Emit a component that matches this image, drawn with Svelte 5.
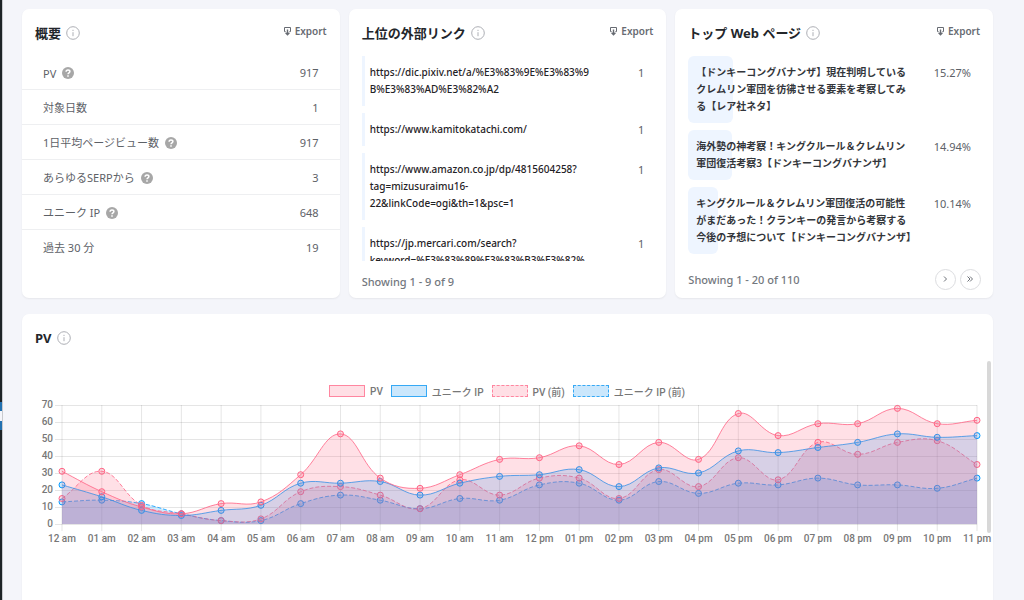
<script lang="ts">
	const overview = [
		{ label: 'PV', value: 917, help: true },
		{ label: '対象日数', value: 1, help: false },
		{ label: '1日平均ページビュー数', value: 917, help: true },
		{ label: 'あらゆるSERPから', value: 3, help: true },
		{ label: 'ユニーク IP', value: 648, help: true },
		{ label: '過去 30 分', value: 19, help: false }
	];

	const links = [
		{ url: 'https://dic.pixiv.net/a/%E3%83%9E%E3%83%9B%E3%83%AD%E3%82%A2', count: 1 },
		{ url: 'https://www.kamitokatachi.com/', count: 1 },
		{
			url: 'https://www.amazon.co.jp/dp/4815604258?tag=mizusuraimu16-22&linkCode=ogi&th=1&psc=1',
			count: 1
		},
		{
			url: 'https://jp.mercari.com/search?keyword=%E3%83%89%E3%83%B3%E3%82%',
			count: 1
		}
	];

	const pages = [
		{
			title:
				'【ドンキーコングバナンザ】現在判明しているクレムリン軍団を彷彿させる要素を考察してみる【レア社ネタ】',
			percent: 15.27
		},
		{
			title: '海外勢の神考察！キングクルール＆クレムリン軍団復活考察3【ドンキーコングバナンザ】',
			percent: 14.94
		},
		{
			title:
				'キングクルール＆クレムリン軍団復活の可能性がまだあった！クランキーの発言から考察する今後の予想について【ドンキーコングバナンザ】',
			percent: 10.14
		}
	];

	const series = [
		{
			name: 'PV',
			kind: 'pink',
			prev: false,
			data: [31, 19, 10, 6, 12, 13, 29, 53, 27, 21, 29, 38, 39, 46, 35, 48, 38, 65, 52, 59, 59, 68, 59, 61]
		},
		{
			name: 'ユニーク IP',
			kind: 'blue',
			prev: false,
			data: [23, 16, 8, 5, 8, 11, 24, 24, 25, 17, 24, 28, 29, 32, 22, 33, 30, 43, 42, 45, 48, 53, 51, 52]
		},
		{
			name: 'PV (前)',
			kind: 'pink',
			prev: true,
			data: [15, 31, 11, 6, 2, 3, 19, 22, 17, 9, 26, 17, 27, 27, 15, 32, 22, 39, 26, 48, 41, 48, 49, 35]
		},
		{
			name: 'ユニーク IP (前)',
			kind: 'blue',
			prev: true,
			data: [13, 14, 12, 6, 2, 2, 12, 17, 14, 9, 15, 14, 23, 24, 14, 25, 18, 24, 23, 27, 23, 23, 21, 27]
		}
	];
	// first series ends up on top
	const layers = [...series].reverse();

	const hours = Array.from({ length: 24 }, (_, i) => {
		const h = String(i % 12 || 12).padStart(2, '0');
		return `${h} ${i < 12 ? 'am' : 'pm'}`;
	});
	const ticks = [0, 10, 20, 30, 40, 50, 60, 70];

	const left = 27;
	const top = 6;
	const plotHeight = 119;
	const bottom = top + plotHeight;
	const tension = 0.4;

	let width = 958;
	$: right = width - 16;
	$: x = (i: number) => left + (i * (right - left)) / 23;
	const y = (v: number) => bottom - (v * plotHeight) / 70;

	function curve(data: number[], x: (i: number) => number) {
		const pts = data.map((v, i) => [x(i), y(v)]);
		const clamp = (v: number) => Math.min(bottom, Math.max(top, v));
		const cps = pts.map((p, i) => {
			const a = pts[i - 1] || p;
			const b = pts[i + 1] || p;
			const d1 = Math.hypot(p[0] - a[0], p[1] - a[1]);
			const d2 = Math.hypot(b[0] - p[0], b[1] - p[1]);
			const k1 = (tension * d1) / (d1 + d2);
			const k2 = (tension * d2) / (d1 + d2);
			const dx = b[0] - a[0];
			const dy = b[1] - a[1];
			return {
				before: [p[0] - k1 * dx, clamp(p[1] - k1 * dy)],
				after: [p[0] + k2 * dx, clamp(p[1] + k2 * dy)]
			};
		});
		let d = `M${pts[0]}`;
		for (let i = 1; i < pts.length; i++) {
			d += `C${cps[i - 1].after} ${cps[i].before} ${pts[i]}`;
		}
		return d;
	}
</script>

{#snippet info()}
	<svg class="info" viewBox="0 0 14 14" aria-hidden="true">
		<circle cx="7" cy="7" r="6.3" />
		<path d="M7 6.2v4M7 3.8v1.2" />
	</svg>
{/snippet}

{#snippet exportButton()}
	<button class="export">
		<svg viewBox="0 0 9 10" aria-hidden="true">
			<path d="M2.6 5.6H1.5V1.5h6v4.1H6.4" />
			<path class="arrow" d="M4.5 3.4v5M2.6 6.7l1.9 2 1.9-2" />
		</svg>
		Export
	</button>
{/snippet}

<div class="page">
	<div class="menu-edge"><span></span></div>
	<main>
		<div class="cards">
			<section class="card">
				<header>
					<h2>概要</h2>
					{@render info()}
					{@render exportButton()}
				</header>
				<table>
					<tbody>
						{#each overview as row}
							<tr>
								<th scope="row">
									<span>{row.label}</span>
									{#if row.help}
										<svg class="help" viewBox="0 0 12 12" aria-hidden="true">
											<circle cx="6" cy="6" r="6" />
											<path d="M4.1 4.7c0-2.4 3.8-2.3 3.8-.1 0 1.3-1.9 1.3-1.9 2.7M6 8.3v1.5" />
										</svg>
									{/if}
								</th>
								<td>{row.value}</td>
							</tr>
						{/each}
					</tbody>
				</table>
			</section>

			<section class="card">
				<header>
					<h2>上位の外部リンク</h2>
					{@render info()}
					{@render exportButton()}
				</header>
				<ul class="list scroll">
					{#each links as link}
						<li>
							<div class="bar" style="width:1%"></div>
							<a href={link.url}>{link.url}</a>
							<span>{link.count}</span>
						</li>
					{/each}
				</ul>
				<footer class="plain"><p>Showing 1 - 9 of 9</p></footer>
			</section>

			<section class="card">
				<header>
					<h2>トップ Web ページ</h2>
					{@render info()}
					{@render exportButton()}
				</header>
				<ul class="list">
					{#each pages as page}
						<li>
							<div class="bar" style="width:{page.percent}%"></div>
							<a href="#top">{page.title}</a>
							<span>{page.percent}%</span>
						</li>
					{/each}
				</ul>
				<footer>
					<p>Showing 1 - 20 of 110</p>
					<button class="pager" aria-label="Next page">
						<svg viewBox="0 0 8 8"><path d="M3 1.5 5.5 4 3 6.5" /></svg>
					</button>
					<button class="pager" aria-label="Last page">
						<svg viewBox="0 0 8 8"><path d="M1.5 1.5 4 4 1.5 6.5M4 1.5 6.5 4 4 6.5" /></svg>
					</button>
				</footer>
			</section>
		</div>

		<section class="card chart-card">
			<header>
				<h2>PV</h2>
				{@render info()}
			</header>
			<div class="chart" bind:clientWidth={width}>
				<div class="legend">
					{#each series as s}
						<span class="key {s.kind}" class:prev={s.prev}><i></i>{s.name}</span>
					{/each}
				</div>
				<svg class="plot" {width} height="150">
					<g class="grid">
						{#each ticks as t}
							<line x1={left - 7} x2={right} y1={Math.round(y(t)) + 0.5} y2={Math.round(y(t)) + 0.5} />
						{/each}
						{#each hours as _, i}
							<line x1={x(i)} x2={x(i)} y1={top} y2={bottom + 7} />
						{/each}
					</g>
					{#each layers as s}
						<g class={s.kind} class:prev={s.prev}>
							<path class="area" d="{curve(s.data, x)}L{x(23)},{bottom}L{x(0)},{bottom}Z" />
							<path class="line" d={curve(s.data, x)} />
							{#each s.data as v, i}
								<circle cx={x(i)} cy={y(v)} r="3" />
							{/each}
						</g>
					{/each}
					{#each ticks as t}
						<text class="y" x={left - 9} y={y(t) + 3}>{t}</text>
					{/each}
					{#each hours as h, i}
						<text x={x(i)} y={bottom + 18}>{h}</text>
					{/each}
				</svg>
				<div class="scrollbar"></div>
			</div>
		</section>
	</main>
</div>

<style>
	:global(body) {
		margin: 0;
		background: #f4f5fa;
	}
	.page {
		display: flex;
		height: 100vh;
		overflow: hidden;
		font-family: 'Noto Sans', 'Noto Sans CJK JP', sans-serif;
		font-size: 11px;
		color: #5d6167;
	}
	.menu-edge {
		display: flex;
		align-items: center;
		flex: none;
		box-sizing: border-box;
		width: 3px;
		padding-top: 232px;
		background: #1d2327;
		border-right: 1px solid #c8cace;
	}
	.menu-edge span {
		width: 2px;
		height: 10px;
		background: #f4f5fa;
		border: solid #2271b1;
		border-width: 9px 0;
	}
	main {
		flex: 1;
		min-width: 0;
		display: flex;
		flex-direction: column;
		gap: 16px;
		padding: 9px 31px 0 19px;
	}
	.cards {
		display: grid;
		grid-template-columns: repeat(3, minmax(0, 1fr));
		gap: 9px;
	}
	.card {
		display: flex;
		flex-direction: column;
		background: #fff;
		border-radius: 7px;
		box-shadow: 0 1px 2px rgba(0, 0, 0, 0.06);
	}
	header {
		display: flex;
		align-items: center;
		height: 47px;
		padding: 0 13px;
	}
	h2 {
		margin: 0 5px 0 0;
		font-size: 13px;
		line-height: 20px;
		font-weight: 700;
		color: #23262b;
	}
	.info {
		width: 14px;
		height: 14px;
		margin-top: 1px;
		fill: none;
		stroke: #adafb5;
	}
	.export {
		display: flex;
		align-items: center;
		gap: 3px;
		margin: 0 0 4px auto;
		padding: 0;
		border: 0;
		background: none;
		font: inherit;
		font-size: 10px;
		font-weight: 600;
		color: #676b72;
		cursor: pointer;
	}
	.export svg {
		width: 9px;
		height: 10px;
		fill: none;
		stroke: #676b72;
	}
	.export .arrow {
		stroke-width: 1.4;
	}
	table {
		width: 100%;
		margin-top: -1px;
		border-collapse: collapse;
	}
	tr + tr {
		border-top: 1px solid #eeeff1;
	}
	th,
	td {
		height: 34px;
		padding: 0 21px;
		font-weight: 400;
		text-align: left;
	}
	td {
		text-align: right;
	}
	th span {
		vertical-align: middle;
	}
	.help {
		width: 12px;
		height: 12px;
		margin-left: 3px;
		vertical-align: middle;
		fill: #a7a7a7;
	}
	.help path {
		fill: none;
		stroke: #fff;
		stroke-width: 1.5;
	}
	.list {
		display: flex;
		flex-direction: column;
		gap: 7px;
		margin: 0 13px;
		padding: 0;
		list-style: none;
	}
	.scroll {
		height: 205px;
		overflow: hidden;
	}
	li {
		position: relative;
		display: flex;
		flex: none;
		justify-content: space-between;
		padding: 8px 9px 8px 8px;
		line-height: 17px;
	}
	.bar {
		position: absolute;
		inset: 0 auto 0 0;
		background: #eef5ff;
		border-radius: 6px;
	}
	.scroll .bar {
		border-radius: 0;
	}
	li a {
		position: relative;
		width: 218px;
		font-size: 10px;
		font-weight: 600;
		color: #33363b;
		text-decoration: none;
		overflow-wrap: anywhere;
	}
	.scroll a {
		width: 221px;
		font-weight: 500;
		color: #1f2226;
	}
	footer {
		display: flex;
		align-items: center;
		gap: 4px;
		height: 22px;
		margin-top: auto;
		padding: 9px 12px 8px 13px;
	}
	footer.plain {
		padding-bottom: 6px;
	}
	footer p {
		margin: 0 auto 0 0;
		font-weight: 500;
		color: #73777e;
	}
	.pager {
		display: grid;
		place-items: center;
		width: 21px;
		height: 21px;
		padding: 0;
		border: 1px solid #dcdde0;
		border-radius: 50%;
		background: #fff;
	}
	.pager svg {
		width: 8px;
		height: 8px;
		fill: none;
		stroke: #6d7178;
	}
	.chart-card {
		flex: 1;
		border-radius: 7px 7px 0 0;
	}
	.chart {
		position: relative;
		margin-left: 13px;
		padding-top: 22px;
	}
	.legend {
		display: flex;
		justify-content: center;
		gap: 8px;
		height: 16px;
		padding-right: 14px;
	}
	.key {
		display: flex;
		align-items: center;
		gap: 5px;
		font-family: Roboto, 'Noto Sans CJK JP', sans-serif;
		font-size: 10px;
		font-weight: 500;
		color: #777;
	}
	.key i {
		width: 34px;
		height: 10px;
		border: 1px solid;
	}
	.key.prev i {
		border-style: dashed;
	}
	.key.pink i {
		border-color: #ff86a0;
		background: #ffdfe5;
	}
	.key.blue i {
		border-color: #36a9f5;
		background: #cbe7fc;
	}
	.plot {
		display: block;
	}
	.grid line {
		stroke: rgba(0, 0, 0, 0.1);
	}
	.plot .pink {
		fill: rgba(255, 99, 132, 0.2);
		stroke: #ff6384;
	}
	.plot .blue {
		fill: rgba(5, 155, 255, 0.2);
		stroke: #059bff;
	}
	.plot .area {
		stroke: none;
	}
	.plot .line {
		fill: none;
		stroke-opacity: 0.8;
	}
	.prev .line {
		stroke-dasharray: 4 2;
	}
	text {
		font-family: Roboto, sans-serif;
		font-size: 10px;
		font-weight: 500;
		fill: #777;
		text-anchor: middle;
	}
	text.y {
		text-anchor: end;
	}
	.scrollbar {
		position: absolute;
		top: 0;
		right: 2px;
		width: 4px;
		height: 172px;
		border-radius: 2px;
		background: #d8d8d8;
	}
</style>
